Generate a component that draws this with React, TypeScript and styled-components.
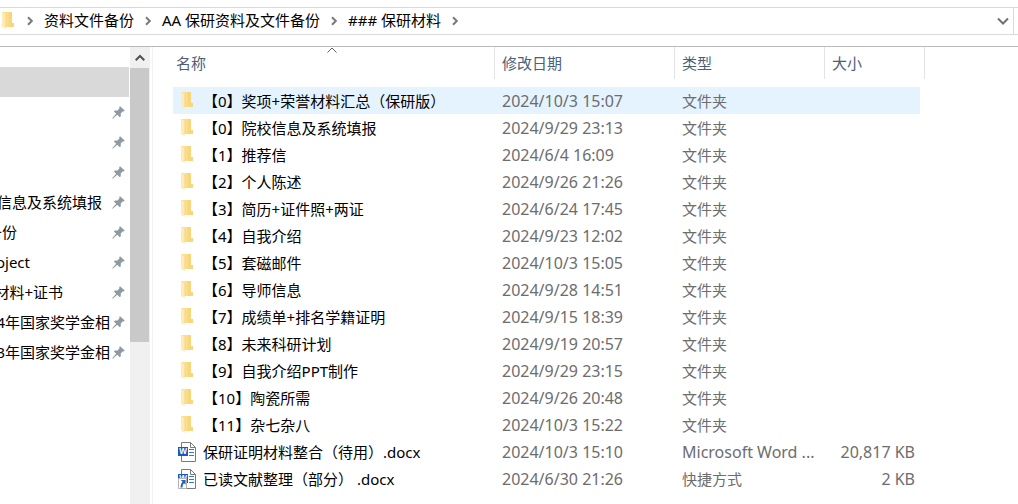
import React from "react";
import styled, { createGlobalStyle } from "styled-components";

const GlobalStyle = createGlobalStyle`
  *, *::before, *::after { box-sizing: border-box; }
  html, body, #root { height: 100%; }
  body {
    margin: 0;
    background: #fff;
    color: #000;
    font: 15px/20px "Noto Sans", "Noto Sans CJK SC", sans-serif;
    overflow: hidden;
  }
  button {
    padding: 0;
    border: 0;
    background: none;
    color: inherit;
    font: inherit;
    cursor: default;
  }
`;

const Window = styled.div`
  display: flex;
  flex-direction: column;
  min-height: 100vh;
`;

const AddressRow = styled.header`
  display: flex;
  padding: 7px 0 11px;
  border-bottom: 1px solid #b9b9b9;
`;

const AddressBar = styled.div`
  flex: 1;
  display: flex;
  align-items: center;
  justify-content: space-between;
  height: 28px;
  padding: 0 4px 0 1px;
  border: solid #d9d9d9;
  border-width: 1px 1px 1px 0;
`;

const SearchEdge = styled.div`
  width: 4px;
  border: solid #d9d9d9;
  border-width: 1px 0;
`;

const Breadcrumb = styled.nav`
  display: flex;
  align-items: center;
  gap: 11px;
`;

const Crumb = styled.button`
  height: 26px;
  padding-bottom: 2px;
  white-space: nowrap;
`;

const IconButton = styled.button`
  display: flex;
  align-items: center;
  justify-content: center;
  height: 24px;
`;

const Body = styled.div`
  flex: 1;
  display: flex;
`;

const QuickAccess = styled.ul`
  width: 130px;
  margin: 0;
  padding: 20px 1px 0 0;
  list-style: none;
  overflow: hidden;
`;

const QuickItem = styled.li<{ $selected?: boolean }>`
  display: flex;
  align-items: center;
  justify-content: space-between;
  height: 30px;
  padding-right: 4px;
  background: ${(p) => (p.$selected ? "#d9d9d9" : "transparent")};
`;

const QuickLabel = styled.span<{ $width: number }>`
  display: flex;
  justify-content: flex-end;
  width: ${(p) => p.$width}px;
  white-space: nowrap;
`;

const ScrollBar = styled.div`
  display: flex;
  flex-direction: column;
  width: 20px;
  background: #f0f0f0;
`;

const ScrollUp = styled(IconButton)`
  height: 21px;
`;

const ScrollThumb = styled.div`
  width: 19px;
  height: 274px;
  background: #c9c9c9;
`;

const Files = styled.main`
  flex: 1;
  min-width: 0;
  margin-left: 2px;
  padding-left: 20px;
  border-left: 1px solid #f2f2f2;
`;

const FileTable = styled.table`
  width: 752px;
  table-layout: fixed;
  border-collapse: collapse;
`;

const Column = styled.col<{ $width: number }>`
  width: ${(p) => p.$width}px;
`;

const HeadCell = styled.th`
  padding: 0 0 8px;
  font-weight: 400;
`;

const SortButton = styled.button<{ $first?: boolean }>`
  position: relative;
  display: flex;
  align-items: center;
  width: 100%;
  height: 32px;
  padding: 0 0 0 ${(p) => (p.$first ? 3 : 7)}px;
  border-right: 1px solid #e3e3e3;
  color: #4c607a;
`;

const SortMark = styled.svg`
  position: absolute;
  top: 0;
  left: 50%;
  margin-left: -7px;
`;

const FileRow = styled.tr<{ $active?: boolean }>`
  height: 27px;
  td:not(:last-child) {
    background: ${(p) => (p.$active ? "#e5f3ff" : "transparent")};
  }
`;

const Cell = styled.td<{ $latin?: boolean; $right?: boolean }>`
  padding: 0 5px 0 7px;
  color: #6d6d6d;
  font-size: ${(p) => (p.$latin ? 16 : 15)}px;
  text-align: ${(p) => (p.$right ? "right" : "left")};
  white-space: nowrap;
`;

const NameCell = styled(Cell)`
  padding: 0 0 0 5px;
  color: #000;
`;

const FileName = styled.div`
  display: flex;
  align-items: center;
  gap: 7px;
`;

const Spill = styled.td`
  padding: 0;
`;

type Kind = "folder" | "word" | "link";

const FolderShape = () => (
  <>
    <path d="M1 0H11v11h2v4H1z" fill="#fbdf8e" />
    <path d="M7.5 0H11v11h2v4H7.5z" fill="#f7d67c" />
    <path d="M1 0l3.8 2v14.9L1 15z" fill="#ffebb4" />
    <path d="M5 2v13" stroke="#f0cf7c" strokeWidth="0.6" fill="none" />
  </>
);

const FolderIcon = () => (
  <svg width="15" height="18" viewBox="0 0 15 18" aria-hidden="true">
    <FolderShape />
  </svg>
);

const Icon = ({ kind }: { kind: Kind }) => {
  if (kind === "folder") {
    return (
      <svg width="18" height="20" viewBox="-2 -1 18 20" aria-hidden="true">
        <FolderShape />
      </svg>
    );
  }
  return (
    <svg width="18" height="20" viewBox="0 0 18 20" aria-hidden="true">
      <path d="M3.5.5h9l5 5v14h-14z" fill="#fff" stroke="#7a7a7a" />
      <path d="M12.5.5v5h5" fill="none" stroke="#7a7a7a" />
      <path d="M11 7.5h5M11 10.5h5M11 13.5h5" stroke="#2b7cd3" />
      <path d="M0 5h10v9H0z" fill="#185abd" />
      <text x="5" y="12.3" fill="#fff" fontSize="8" fontWeight="700" textAnchor="middle">
        W
      </text>
      {kind === "link" && (
        <>
          <path d="M.5 9.5h8v10h-8z" fill="#fff" stroke="#b4b4b4" />
          <path d="M2.8 11H7.6v4.8L6 14.3Q4.4 15.8 4.5 18.4H2.4Q2.2 15.2 4.5 12.7z" fill="#2867b2" />
        </>
      )}
    </svg>
  );
};

const Chevron = () => (
  <svg width="6" height="10" viewBox="0 0 6 10" aria-hidden="true">
    <path d="M1 1.2 4.8 5 1 8.8" fill="none" stroke="#7a7a7a" strokeWidth="2" />
  </svg>
);

const Pin = () => (
  <svg width="13" height="13" viewBox="0 0 13 13" aria-hidden="true">
    <path
      d="M8 .3 12.7 4.6 11.8 5.4 10.9 5.2 8.7 7.5 8.8 10.2 7.8 11.2 5.2 8.7 1 12.6 .3 12.7 .4 12 4.2 7.7 1.9 5.4 2.9 4.4 5.5 4.4 7.5 2.2 7.2 1.2z"
      fill="#8d99a3"
    />
  </svg>
);

const crumbs = ["资料文件备份", "AA 保研资料及文件备份", "### 保研材料"];

const quickItems = [
  { label: "", width: 0, selected: true },
  { label: "", width: 0 },
  { label: "", width: 0 },
  { label: "", width: 0 },
  { label: "信息及系统填报", width: 102 },
  { label: "备份", width: 17 },
  { label: "oject", width: 30 },
  { label: "材料+证书", width: 63 },
  { label: "4年国家奖学金相", width: 110 },
  { label: "3年国家奖学金相", width: 110 },
];

const files: { name: string; date: string; type: string; size?: string; kind: Kind }[] = [
  { name: "【0】奖项+荣誉材料汇总（保研版）", date: "2024/10/3 15:07", type: "文件夹", kind: "folder" },
  { name: "【0】院校信息及系统填报", date: "2024/9/29 23:13", type: "文件夹", kind: "folder" },
  { name: "【1】推荐信", date: "2024/6/4 16:09", type: "文件夹", kind: "folder" },
  { name: "【2】个人陈述", date: "2024/9/26 21:26", type: "文件夹", kind: "folder" },
  { name: "【3】简历+证件照+两证", date: "2024/6/24 17:45", type: "文件夹", kind: "folder" },
  { name: "【4】自我介绍", date: "2024/9/23 12:02", type: "文件夹", kind: "folder" },
  { name: "【5】套磁邮件", date: "2024/10/3 15:05", type: "文件夹", kind: "folder" },
  { name: "【6】导师信息", date: "2024/9/28 14:51", type: "文件夹", kind: "folder" },
  { name: "【7】成绩单+排名学籍证明", date: "2024/9/15 18:39", type: "文件夹", kind: "folder" },
  { name: "【8】未来科研计划", date: "2024/9/19 20:57", type: "文件夹", kind: "folder" },
  { name: "【9】自我介绍PPT制作", date: "2024/9/29 23:15", type: "文件夹", kind: "folder" },
  { name: "【10】陶瓷所需", date: "2024/9/26 20:48", type: "文件夹", kind: "folder" },
  { name: "【11】杂七杂八", date: "2024/10/3 15:22", type: "文件夹", kind: "folder" },
  { name: "保研证明材料整合（待用）.docx", date: "2024/10/3 15:10", type: "Microsoft Word ...", size: "20,817 KB", kind: "word" },
  { name: "已读文献整理（部分） .docx", date: "2024/6/30 21:26", type: "快捷方式", size: "2 KB", kind: "link" },
];

export default function App() {
  return (
    <Window lang="zh-CN">
      <GlobalStyle />
      <AddressRow>
        <AddressBar>
          <Breadcrumb>
            <FolderIcon />
            {crumbs.map((crumb) => (
              <React.Fragment key={crumb}>
                <Chevron />
                <Crumb type="button">{crumb}</Crumb>
              </React.Fragment>
            ))}
            <Chevron />
          </Breadcrumb>
          <IconButton type="button" aria-label="历史记录">
            <svg width="12" height="8" viewBox="0 0 12 8" aria-hidden="true">
              <path d="M1 1.5 6 6.5 11 1.5" fill="none" stroke="#707070" strokeWidth="2" />
            </svg>
          </IconButton>
        </AddressBar>
        <SearchEdge />
      </AddressRow>
      <Body>
        <QuickAccess>
          {quickItems.map((item, i) => (
            <QuickItem key={i} $selected={item.selected}>
              <QuickLabel $width={item.width}>{item.label}</QuickLabel>
              {!item.selected && <Pin />}
            </QuickItem>
          ))}
        </QuickAccess>
        <ScrollBar>
          <ScrollUp type="button" aria-label="向上滚动">
            <svg width="10" height="8" viewBox="0 0 10 8" aria-hidden="true">
              <path d="M.7 6.3 5 2 9.3 6.3" fill="none" stroke="#505050" strokeWidth="2" />
            </svg>
          </ScrollUp>
          <ScrollThumb />
        </ScrollBar>
        <Files>
          <FileTable>
            <colgroup>
              <Column $width={322} />
              <Column $width={180} />
              <Column $width={150} />
              <Column $width={95} />
              <Column $width={5} />
            </colgroup>
            <thead>
              <tr>
                <HeadCell scope="col">
                  <SortButton type="button" $first>
                    名称
                    <SortMark width="10" height="6" viewBox="0 0 10 6" aria-hidden="true">
                      <path d="M.5 5.5 5 1 9.5 5.5" fill="none" stroke="#606060" />
                    </SortMark>
                  </SortButton>
                </HeadCell>
                <HeadCell scope="col">
                  <SortButton type="button">修改日期</SortButton>
                </HeadCell>
                <HeadCell scope="col">
                  <SortButton type="button">类型</SortButton>
                </HeadCell>
                <HeadCell scope="col" colSpan={2}>
                  <SortButton type="button">大小</SortButton>
                </HeadCell>
              </tr>
            </thead>
            <tbody>
              {files.map((file, i) => (
                <FileRow key={file.name} $active={i === 0}>
                  <NameCell>
                    <FileName>
                      <Icon kind={file.kind} />
                      <span>{file.name}</span>
                    </FileName>
                  </NameCell>
                  <Cell $latin>{file.date}</Cell>
                  <Cell $latin={file.kind === "word"}>{file.type}</Cell>
                  <Cell $latin $right>{file.size}</Cell>
                  <Spill />
                </FileRow>
              ))}
            </tbody>
          </FileTable>
        </Files>
      </Body>
    </Window>
  );
}
